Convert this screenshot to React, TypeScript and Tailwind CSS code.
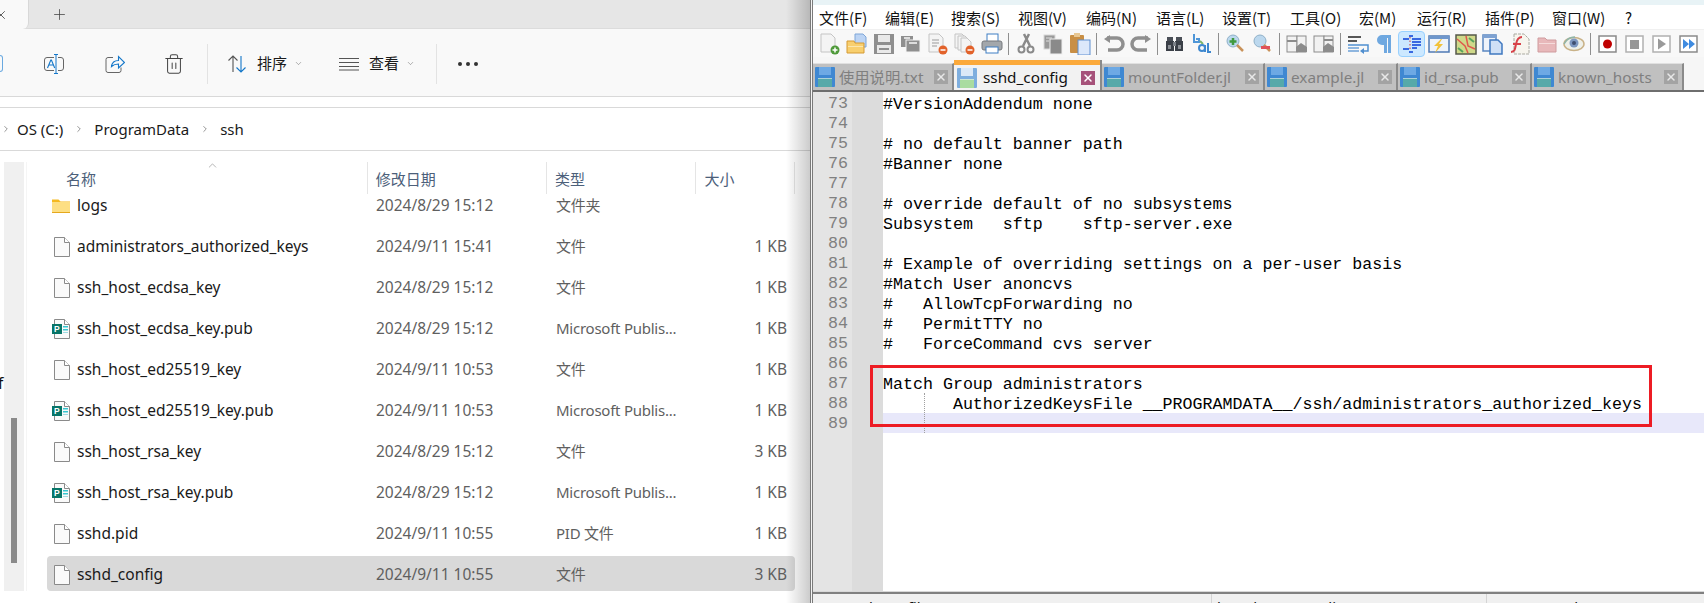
import React from "react";
import { ChevronDown, ChevronRight, ChevronUp, Plus, Trash2, X } from "lucide-react";

const UI_FONT = "font-['Noto_Sans','Noto_Sans_CJK_SC',sans-serif]";
const MONO_FONT = "font-['Liberation_Mono','Courier_New',monospace]";

type FileRow = { name: string; date: string; type: string; size: string; kind: "folder" | "file" | "pub"; selected?: boolean };

const files: FileRow[] = [
  { name: "logs", date: "2024/8/29 15:12", type: "文件夹", size: "", kind: "folder" },
  { name: "administrators_authorized_keys", date: "2024/9/11 15:41", type: "文件", size: "1 KB", kind: "file" },
  { name: "ssh_host_ecdsa_key", date: "2024/8/29 15:12", type: "文件", size: "1 KB", kind: "file" },
  { name: "ssh_host_ecdsa_key.pub", date: "2024/8/29 15:12", type: "Microsoft Publis...", size: "1 KB", kind: "pub" },
  { name: "ssh_host_ed25519_key", date: "2024/9/11 10:53", type: "文件", size: "1 KB", kind: "file" },
  { name: "ssh_host_ed25519_key.pub", date: "2024/9/11 10:53", type: "Microsoft Publis...", size: "1 KB", kind: "pub" },
  { name: "ssh_host_rsa_key", date: "2024/8/29 15:12", type: "文件", size: "3 KB", kind: "file" },
  { name: "ssh_host_rsa_key.pub", date: "2024/8/29 15:12", type: "Microsoft Publis...", size: "1 KB", kind: "pub" },
  { name: "sshd.pid", date: "2024/9/11 10:55", type: "PID 文件", size: "1 KB", kind: "file" },
  { name: "sshd_config", date: "2024/9/11 10:55", type: "文件", size: "3 KB", kind: "file", selected: true },
];

const menus = [
  { label: "文件(F)", w: "w-[66px]" },
  { label: "编辑(E)", w: "w-[66px]" },
  { label: "搜索(S)", w: "w-[67px]" },
  { label: "视图(V)", w: "w-[68px]" },
  { label: "编码(N)", w: "w-[70px]" },
  { label: "语言(L)", w: "w-[66px]" },
  { label: "设置(T)", w: "w-[68px]" },
  { label: "工具(O)", w: "w-[69px]" },
  { label: "宏(M)", w: "w-[58px]" },
  { label: "运行(R)", w: "w-[68px]" },
  { label: "插件(P)", w: "w-[67px]" },
  { label: "窗口(W)", w: "w-[73px]" },
  { label: "?", w: "w-[20px]" },
];

const tabs = [
  { label: "使用说明.txt", w: "w-[141px]" },
  { label: "sshd_config", w: "w-[148px]", active: true },
  { label: "mountFolder.jl", w: "w-[163px]" },
  { label: "example.jl", w: "w-[133px]" },
  { label: "id_rsa.pub", w: "w-[134px]" },
  { label: "known_hosts", w: "w-[152px]" },
];

const code = [
  "#VersionAddendum none",
  "",
  "# no default banner path",
  "#Banner none",
  "",
  "# override default of no subsystems",
  "Subsystem   sftp    sftp-server.exe",
  "",
  "# Example of overriding settings on a per-user basis",
  "#Match User anoncvs",
  "#   AllowTcpForwarding no",
  "#   PermitTTY no",
  "#   ForceCommand cvs server",
  "",
  "Match Group administrators",
  "       AuthorizedKeysFile __PROGRAMDATA__/ssh/administrators_authorized_keys",
  "",
];

const FileIcon = ({ kind }: { kind: FileRow["kind"] }) => {
  if (kind === "folder") {
    return (
      <svg width="20" height="20" viewBox="0 0 20 20">
        <path d="M1 3.5h6.5l2 2H19V17H1z" fill="#f5b921" />
        <rect x="1" y="6" width="18" height="11" fill="#fddf84" />
        <rect x="1" y="16" width="18" height="1" fill="#e5a81d" />
      </svg>
    );
  }
  return (
    <svg width="20" height="20" viewBox="0 0 20 20">
      <path d="M3.5.5h10l5 5v14h-15z" fill="#fafafa" stroke="#8a8a8a" />
      <path d="M13.5.5v5h5" fill="#fff" stroke="#8a8a8a" />
      {kind === "pub" && (
        <>
          <rect x="1" y="5" width="10" height="10" fill="#077568" />
          <text x="3" y="13" fontSize="8.5" fontWeight="700" fill="#fff" fontFamily="Liberation Sans, sans-serif">P</text>
          <rect x="12" y="7" width="5" height="1.5" fill="#37c6d0" />
          <rect x="12" y="10" width="5" height="1.5" fill="#37c6d0" />
          <rect x="12" y="13" width="5" height="1" fill="#a0dde2" />
        </>
      )}
    </svg>
  );
};

const Explorer = () => (
  <div className={`relative w-[810px] h-full bg-white flex flex-col text-[15.5px] ${UI_FONT}`}>
    <div className="h-[29px] shrink-0 flex bg-[#e6e6e6] border-b border-[#dcdcdc]">
      <div className="w-[29px] h-[29px] bg-[#f9f9f9] border-r border-[#d8d8d8] rounded-br-md flex items-center">
        <X size={14} strokeWidth={1.2} className="ml-[-6px] text-[#222]" />
      </div>
      <div className="ml-[22px] flex items-center">
        <Plus size={17} strokeWidth={1.1} className="text-[#444]" />
      </div>
    </div>

    <div className="h-[68px] shrink-0 bg-[#f9f9f9] border-b border-[#d9d9d9] flex items-center relative pt-[2px]">
      <div className="w-[3px] h-[17px] border border-[#6aa9e0] border-l-0 rounded-r-sm mr-[41px]" />
      <svg width="20" height="20" viewBox="0 0 20 20" fill="none">
        <rect x="0.5" y="3.5" width="19" height="13" rx="2.5" stroke="#666" />
        <rect x="10" y="1" width="4" height="18" fill="#f9f9f9" />
        <path d="M12 .5v19M10 .5h4M10 19.5h4" stroke="#1477c9" />
        <path d="M3.5 14 6.8 6h.6l3.3 8M5 11h4.5" stroke="#1477c9" strokeWidth="1.1" />
      </svg>
      <svg className="ml-[41px]" width="20" height="20" viewBox="0 0 20 20" fill="none">
        <path d="M8 3.5H3a2 2 0 0 0-2 2v11a2 2 0 0 0 2 2h11a2 2 0 0 0 2-2v-3" stroke="#666" />
        <path d="M6.5 12.5c.5-4 3-6 7-6V2.5l6 6-6 5.5V10c-3 0-5 .6-7 2.500z" stroke="#1477c9" strokeWidth="1.1" />
      </svg>
      <Trash2 size={22} strokeWidth={1.1} className="ml-[38px] text-[#444]" />
      <div className="ml-[22px] w-px h-[40px] bg-[#e3e3e3]" />
      <svg className="ml-[19px]" width="20" height="20" viewBox="0 0 20 20" fill="none">
        <path d="M6 18V2M1.500 6.500 6 2l4.500 4.500" stroke="#555" strokeWidth="1.1" />
        <path d="M14 2v16M9.500 13.500 14 18l4.500-4.500" stroke="#1477c9" strokeWidth="1.1" />
      </svg>
      <span className="ml-[10px] text-[15px] text-[#1a1a1a]">排序</span>
      <ChevronDown size={9} strokeWidth={1.2} className="ml-[7px] text-[#555]" />
      <svg className="ml-[36px]" width="20" height="14" viewBox="0 0 20 14" fill="none" stroke="#555">
        <path d="M0 1.500h20M0 5.500h20M0 9.500h20M0 13h20" />
      </svg>
      <span className="ml-[10px] text-[15px] text-[#1a1a1a]">查看</span>
      <ChevronDown size={9} strokeWidth={1.2} className="ml-[7px] text-[#555]" />
      <div className="ml-[21px] w-px h-[40px] bg-[#e3e3e3]" />
      <div className="ml-[21px] flex gap-[4px]">
        <div className="w-[4px] h-[4px] rounded-full bg-[#333]" />
        <div className="w-[4px] h-[4px] rounded-full bg-[#333]" />
        <div className="w-[4px] h-[4px] rounded-full bg-[#333]" />
      </div>
    </div>

    <div className="h-[11px] shrink-0 border-b border-[#d9d9d9]" />

    <div className="h-[43px] shrink-0 border-b border-[#d9d9d9] flex items-center text-[15px] text-[#1a1a1a] pl-[1px]">
      <ChevronRight size={10} strokeWidth={1.5} className="text-[#555]" />
      <span className="ml-[6px]">OS (C:)</span>
      <ChevronRight size={10} strokeWidth={1.5} className="ml-[11px] text-[#555]" />
      <span className="ml-[10px]">ProgramData</span>
      <ChevronRight size={10} strokeWidth={1.5} className="ml-[11px] text-[#555]" />
      <span className="ml-[10px]">ssh</span>
    </div>

    <div className="flex-1 flex pt-[11px] pl-[4px] min-h-0">
      <div className="w-[20px] h-[429px] bg-[#f0f0f0] relative">
        <div className="absolute left-[7px] top-[256px] w-[6px] h-[145px] bg-[#8a8a8a]" />
      </div>
      <div className="w-px h-[429px] ml-[2px] bg-[#f5f5f5]" />
      <div className="ml-[20px] w-[748px]">
        <div className="h-[25px] flex text-[15px] text-[#4c607a] relative">
          <span className="w-[321px] pl-[19px] pt-[2px] h-[32px] flex items-center">名称</span>
          <ChevronUp size={13} strokeWidth={1} className="absolute left-[159px] top-[-3px] text-[#777]" />
          <span className="w-[180px] pl-[8px] pt-[2px] h-[32px] flex items-center border-l border-[#e5e5e5]">修改日期</span>
          <span className="w-[150px] pl-[8px] pt-[2px] h-[32px] flex items-center border-l border-[#e5e5e5]">类型</span>
          <span className="w-[100px] pl-[8px] pt-[2px] h-[32px] flex items-center border-l border-r border-[#e5e5e5]">大小</span>
        </div>
        <div className="flex flex-col gap-[6px]">
          {files.map((f) => (
            <div
              key={f.name}
              className={`h-[35px] pt-[2px] grid grid-cols-[329px_180px_150px_81px] items-center rounded-sm ${f.selected ? "bg-[#d9d9d9]" : ""}`}
            >
              <div className="flex items-center gap-[6px] pl-[4px] text-[#1a1a1a]">
                <FileIcon kind={f.kind} />
                <span>{f.name}</span>
              </div>
              <span className="text-[#5f5f5f]">{f.date}</span>
              <span className="text-[#5f5f5f] text-[15px] tracking-[-0.25px]">{f.type}</span>
              <span className="text-[#5f5f5f] text-right">{f.size}</span>
            </div>
          ))}
        </div>
      </div>
    </div>

    <span className="absolute left-[-2px] top-[372px] text-[#111]">f</span>
    <div className="absolute right-0 top-0 bottom-0 w-[24px] bg-gradient-to-r from-transparent to-black/20" />
  </div>
);

const Floppy = ({ active }: { active?: boolean }) => (
  <svg width="20" height="20" viewBox="0 0 20 20" className="shrink-0">
    <rect width="20" height="20" rx="1" fill={active ? "#7eaede" : "#3f88d2"} />
    <rect x="4" y="0" width="12" height="8" fill={active ? "#dbe9f7" : "#6da9e4"} />
    <rect x="3" y="11" width="14" height="9" fill={active ? "#a9dca0" : "#56a9a9"} />
    <rect x="3" y="11" width="14" height="1" fill="#e6eef6" fillOpacity="0.6" />
  </svg>
);

const Tab = ({ label, w, active }: { label: string; w: string; active?: boolean }) =>
  active ? (
    <div className={`${w} h-[30px] flex flex-col bg-[#f2f2f2] border-r-2 border-[#8a8a8a] shrink-0`}>
      <div className="h-[5px] bg-[#fba93a] shrink-0" />
      <div className="flex-1 flex items-center pl-[3px] pr-[5px]">
        <Floppy active />
        <span className="ml-[6px] text-[15.3px] text-[#111]">{label}</span>
        <div className="ml-auto w-[14px] h-[14px] bg-[#a6527a] flex items-center justify-center">
          <X size={12} strokeWidth={3} className="text-white" />
        </div>
      </div>
    </div>
  ) : (
    <div className={`${w} h-[27px] flex items-center bg-[#c0c0c0] border-r-2 border-[#8a8a8a] border-t border-t-[#e0e0e0] pl-[2px] pr-[4px] shrink-0`}>
      <Floppy />
      <span className="ml-[4px] text-[15.3px] text-[#7f7f7f]">{label}</span>
      <div className="ml-auto w-[14px] h-[14px] bg-[#a3a3a3] flex items-center justify-center">
        <X size={12} strokeWidth={3} className="text-[#e8e8e8]" />
      </div>
    </div>
  );

const Sep = () => (
  <div className="w-[7px] h-full flex justify-center items-center shrink-0">
    <div className="w-px h-[22px] bg-[#8f8f8f]" />
  </div>
);

const Btn = ({ children, on }: { children: React.ReactNode; on?: boolean }) => (
  <div className={`w-[27px] h-[26px] shrink-0 flex items-center justify-center rounded-sm ${on ? "bg-[#cce8ff] border border-[#99d1ff]" : ""}`}>
    <svg width="22" height="22" viewBox="0 0 22 22">
      {children}
    </svg>
  </div>
);

const Page = ({ x = 2, y = 1, w = 14, h = 18, fill = "#f4f4f4" }: { x?: number; y?: number; w?: number; h?: number; fill?: string }) => (
  <path d={`M${x} ${y}h${w - 4}l4 4v${h - 4}h-${w}z`} fill={fill} stroke="#c4c4c4" />
);

const Badge = ({ color, plus }: { color: string; plus?: boolean }) => (
  <>
    <circle cx="16" cy="17" r="4.500" fill={color} />
    <path d="M13.500 17h5" stroke="#fff" strokeWidth="1.500" />
    {plus && <path d="M16 14.500v5" stroke="#fff" strokeWidth="1.500" />}
  </>
);

const Magnifier = ({ children }: { children: React.ReactNode }) => (
  <>
    <circle cx="8" cy="8" r="6" fill="#bcd8ee" stroke="#8fb0c8" />
    <path d="M12 12l6 6" stroke="#c9925a" strokeWidth="2.500" />
    {children}
  </>
);

const PaneIcon = ({ flip }: { flip?: boolean }) => (
  <>
    <rect x="1" y="3" width="10" height="16" fill="#f2f2f2" stroke="#8c8c8c" />
    <rect x="11" y="3" width="9" height="16" fill="#f2f2f2" stroke="#8c8c8c" />
    {flip && <path d="M1 8h10" stroke="#8c8c8c" strokeWidth="2" />}
    {!flip && <path d="M11 7h9" stroke="#8c8c8c" strokeWidth="2" />}
    <path d="M10 19v-5l5-4 6 4v5z" fill="#8c8c8c" />
  </>
);

const Toolbar = () => (
  <div className="h-[28px] shrink-0 flex items-center pl-[3px] bg-[#f8f8f8] border-t border-[#f0f0f0]">
    <Btn><Page /><Badge color="#4f9a3a" plus /></Btn>
    <Btn>
      <path d="M9 1h8l3 3v10H9z" fill="#bcd4f4" stroke="#7fa6d8" />
      <path d="M1 8h7l1 2h9v10H1z" fill="#f8cf6e" stroke="#d59a35" />
      <rect x="2" y="13" width="15" height="1" fill="#fbe6ae" />
    </Btn>
    <Btn>
      <path d="M1 1h20v20H1z" fill="#8f8f8f" />
      <rect x="5" y="2" width="12" height="7" fill="#e9e9e9" />
      <rect x="4" y="12" width="14" height="8" fill="#e9e9e9" />
      <rect x="6" y="15" width="10" height="2" fill="#8f8f8f" />
    </Btn>
    <Btn>
      <rect x="1" y="3" width="12" height="11" fill="#8f8f8f" />
      <rect x="4" y="4" width="6" height="2" fill="#ddd" />
      <rect x="6" y="7" width="14" height="12" fill="#8f8f8f" stroke="#f4f4f4" />
      <rect x="9" y="9" width="8" height="2" fill="#ddd" />
    </Btn>
    <Btn>
      <Page />
      <path d="M5 7h7M5 10h7M5 13h5" stroke="#9b9b9b" />
      <Badge color="#e2622a" />
    </Btn>
    <Btn>
      <Page x={1} y={1} w={11} h={14} />
      <Page x={4} y={3} w={11} h={14} />
      <Page x={7} y={5} w={10} h={14} />
      <Badge color="#e2622a" />
    </Btn>
    <Btn>
      <rect x="6" y="1" width="11" height="9" fill="#fff" stroke="#3e7ec4" />
      <rect x="1" y="8" width="20" height="9" rx="2" fill="#a3a7ab" stroke="#76797c" />
      <rect x="5" y="14" width="12" height="6" fill="#fff" stroke="#3e7ec4" />
    </Btn>
    <Sep />
    <Btn>
      <path d="M14 1 8 13M9 1l6 12" stroke="#8a8a8a" strokeWidth="2.500" fill="none" />
      <circle cx="6.500" cy="16.500" r="3" fill="none" stroke="#8a8a8a" strokeWidth="2" />
      <circle cx="15.500" cy="16.500" r="3" fill="none" stroke="#8a8a8a" strokeWidth="2" />
    </Btn>
    <Btn>
      <rect x="2" y="2" width="11" height="14" fill="#9a9a9a" stroke="#d8d8d8" />
      <rect x="8" y="6" width="12" height="15" fill="#8a8a8a" stroke="#eee" />
      <path d="M4 5h6M4 8h3" stroke="#ddd" />
    </Btn>
    <Btn>
      <rect x="1" y="2" width="14" height="18" rx="1" fill="#c98f45" />
      <rect x="5" y="0" width="6" height="4" fill="#e8c792" />
      <rect x="9" y="7" width="12" height="15" fill="#dce8fa" stroke="#5e8fd0" />
    </Btn>
    <Sep />
    <Btn>
      <path d="M4 5h10a4 4 0 0 1 0 12H5" fill="none" stroke="#8f8f8f" strokeWidth="3.500" />
      <path d="M1 6l6-4v8z" fill="#8f8f8f" />
    </Btn>
    <Btn>
      <path d="M18 5H8a4 4 0 0 0 0 12h9" fill="none" stroke="#8f8f8f" strokeWidth="3.500" />
      <path d="M21 6l-6-4v8z" fill="#8f8f8f" />
    </Btn>
    <Sep />
    <Btn>
      <rect x="3" y="4" width="6" height="4" fill="#4a4f57" />
      <rect x="12" y="4" width="6" height="4" fill="#4a4f57" />
      <rect x="2" y="8" width="8" height="10" fill="#3a3f47" />
      <rect x="11" y="8" width="8" height="10" fill="#3a3f47" />
      <rect x="9" y="9" width="3" height="4" fill="#7b8087" />
      <rect x="4" y="12" width="3" height="4" fill="#8c9096" />
      <rect x="14" y="12" width="3" height="4" fill="#8c9096" />
    </Btn>
    <Btn>
      <path d="M3 1v8h5V6H5" fill="none" stroke="#4f96d8" strokeWidth="2" />
      <path d="M9 8l3 3" stroke="#7bb36a" strokeWidth="2" />
      <circle cx="11" cy="15" r="3" fill="none" stroke="#3e88cf" strokeWidth="2" />
      <path d="M14 12v7M17 10v9h3" fill="none" stroke="#3e88cf" strokeWidth="2" />
    </Btn>
    <Sep />
    <Btn><Magnifier><path d="M8 5v7M4.500 8.500h7" stroke="#3f9a3f" strokeWidth="2.500" /></Magnifier></Btn>
    <Btn><Magnifier><path d="M9 14.500h9" stroke="#e0525a" strokeWidth="3" /></Magnifier></Btn>
    <Sep />
    <Btn><PaneIcon flip /></Btn>
    <Btn><PaneIcon /></Btn>
    <Sep />
    <Btn>
      <path d="M1 4h13M1 8h9" stroke="#222" strokeWidth="1.500" />
      <path d="M1 12h20v6h-6" fill="none" stroke="#4f8ecf" strokeWidth="1.500" />
      <path d="M1 15h11M1 18h11" stroke="#8fb6df" strokeWidth="2" />
      <path d="M13 18l4-3v6z" fill="#4f8ecf" />
    </Btn>
    <Btn>
      <path d="M16 2H8a5 5 0 0 0 0 10h2v8h3V5h1v15h3V2z" fill="#6fa8e0" />
    </Btn>
    <Btn on>
      <path d="M8 3h4M2 6h6M11 6h9M11 9h9M11 12h9M11 15h5M2 16h6M8 19h4" stroke="#0a3fd8" strokeWidth="1.700" />
      <path d="M9 4v14" stroke="#d03030" strokeDasharray="1.500 2" />
    </Btn>
    <Btn>
      <rect x="1" y="3" width="20" height="16" fill="#eef3fa" stroke="#4f79b4" strokeWidth="1.500" />
      <rect x="1" y="3" width="20" height="3" fill="#6f97cc" />
      <path d="M13 6 6 13h4l-3 7 8-9h-4l3-5z" fill="#f2c23a" />
    </Btn>
    <Btn>
      <rect x="1" y="2" width="20" height="19" fill="#cfd98a" stroke="#55584a" strokeWidth="1.500" />
      <path d="M2 6l8 7 3 7M11 3l2 10 7 3" stroke="#e0584c" strokeWidth="1.500" fill="none" />
      <path d="M3 15l5 4M14 5l5 4" stroke="#59a45e" strokeWidth="2" />
    </Btn>
    <Btn>
      <rect x="1" y="2" width="13" height="16" fill="#eef3fa" stroke="#5a86c0" strokeWidth="1.500" />
      <rect x="1" y="2" width="13" height="3" fill="#7ea2d2" />
      <path d="M8 7h8l4 4v10H8z" fill="#cfe0f6" stroke="#3f78c0" strokeWidth="1.500" />
    </Btn>
    <Btn>
      <path d="M5 1h10l5 5v15H5z" fill="#f7f5ee" stroke="#a9a9a0" strokeDasharray="3 1" />
      <path d="M2 19c4 0 4-3 5-8s3-7 6-7M4 11h8" fill="none" stroke="#d8424a" strokeWidth="2" />
    </Btn>
    <Btn>
      <path d="M2 5h7l2 2h9v12H2z" fill="#e8b8ba" stroke="#cf9c9f" />
      <rect x="3" y="10" width="16" height="1" fill="#f5dcdc" />
    </Btn>
    <Btn>
      <ellipse cx="11" cy="11" rx="10" ry="6.500" fill="#eef0ea" stroke="#c9b288" strokeWidth="1.500" />
      <circle cx="11" cy="10" r="4.500" fill="#7d97c0" />
      <circle cx="11" cy="10" r="2" fill="#3f4f6f" />
      <path d="M1 11c3-6 7-7 11-7" fill="none" stroke="#8fb5a8" strokeWidth="1.500" />
    </Btn>
    <Sep />
    <Btn>
      <rect x="2" y="3" width="17" height="16" fill="#fff" stroke="#8a8a8a" strokeWidth="1.500" />
      <circle cx="10.500" cy="11" r="4.500" fill="#c00000" />
    </Btn>
    <Btn>
      <rect x="2" y="3" width="17" height="16" fill="#fff" stroke="#b0b0b0" strokeWidth="1.500" />
      <rect x="6" y="7" width="9" height="9" fill="#979797" />
    </Btn>
    <Btn>
      <rect x="2" y="3" width="17" height="16" fill="#fff" stroke="#b0b0b0" strokeWidth="1.500" />
      <path d="M7 5.500 15 11l-8 5.500z" fill="#9a9a9a" />
    </Btn>
    <Btn>
      <rect x="2" y="3" width="17" height="16" fill="#fff" stroke="#8a8a8a" strokeWidth="1.500" />
      <path d="M5 6l6 5-6 5zM11 6l6 5-6 5z" fill="#3f8be0" />
    </Btn>
  </div>
);

const Editor = () => (
  <div className="flex-1 min-h-0 flex bg-white border-t-2 border-[#6e6e6e] border-b border-b-[#d8d8d8] relative">
    <div className={`w-[39px] shrink-0 bg-[#e4e4e4] pt-px text-[16.65px] leading-[20px] text-[#808080] text-right pr-[4px] ${MONO_FONT}`}>
      {code.map((_, i) => (
        <div key={i} className="h-[20px] pt-[1px]">{73 + i}</div>
      ))}
    </div>
    <div className="w-[31px] shrink-0 bg-[#dcdcdc]" />
    <div className={`flex-1 pt-px text-[16.65px] leading-[20px] text-black whitespace-pre ${MONO_FONT}`}>
      {code.map((line, i) => (
        <div key={i} className={`h-[20px] pt-[2px] ${i === 16 ? "bg-[#e8e8fa]" : ""}`}>{line}</div>
      ))}
    </div>
    <div className="absolute left-[111px] top-[301px] h-[40px] border-l border-dotted border-[#a0a0a0]" />
    <div className="absolute left-[57px] top-[273px] w-[782px] h-[62px] border-[3px] border-[#ed1c24]" />
  </div>
);

const Notepad = () => (
  <div className={`w-[894px] h-full flex flex-col border-l-3 border-double border-[#7a7a7a] bg-[#f4f4f4] ${UI_FONT}`}>
    <div className="h-[5px] shrink-0 bg-[#e8f3f6]" />
    <div className="h-[24px] shrink-0 flex items-center pl-[6px] bg-white text-[15px] text-[#111] font-['Noto_Sans_CJK_SC','Noto_Sans',sans-serif]">
      {menus.map((m) => (
        <span key={m.label} className={`${m.w} shrink-0 leading-none`}>{m.label}</span>
      ))}
    </div>
    <Toolbar />
    <div className="h-[33px] shrink-0 flex items-end pt-[3px] bg-[#f6f6f6]">
      {tabs.map((t) => (
        <Tab key={t.label} {...t} />
      ))}
    </div>
    <Editor />
    <div className="h-[11px] shrink-0 border-t-2 border-[#808080] bg-[#f0f0f0] flex text-[15px] leading-[20px] text-[#111] overflow-hidden">
      <div className="w-[399px] pl-[7px] pt-[3px] border-r border-[#d4d4d4] h-full">Normal text file</div>
      <div className="w-[275px] pl-[5px] pt-[3px] border-r border-[#d4d4d4] h-full whitespace-pre">length : 3,238    lines : 89</div>
      <div className="flex-1 pl-[7px] pt-[3px] whitespace-pre">Ln : 89    Col : 1    Pos : 3,238</div>
    </div>
  </div>
);

export default function App() {
  return (
    <div className="w-[1704px] h-[603px] flex overflow-hidden bg-white">
      <Explorer />
      <Notepad />
    </div>
  );
}
